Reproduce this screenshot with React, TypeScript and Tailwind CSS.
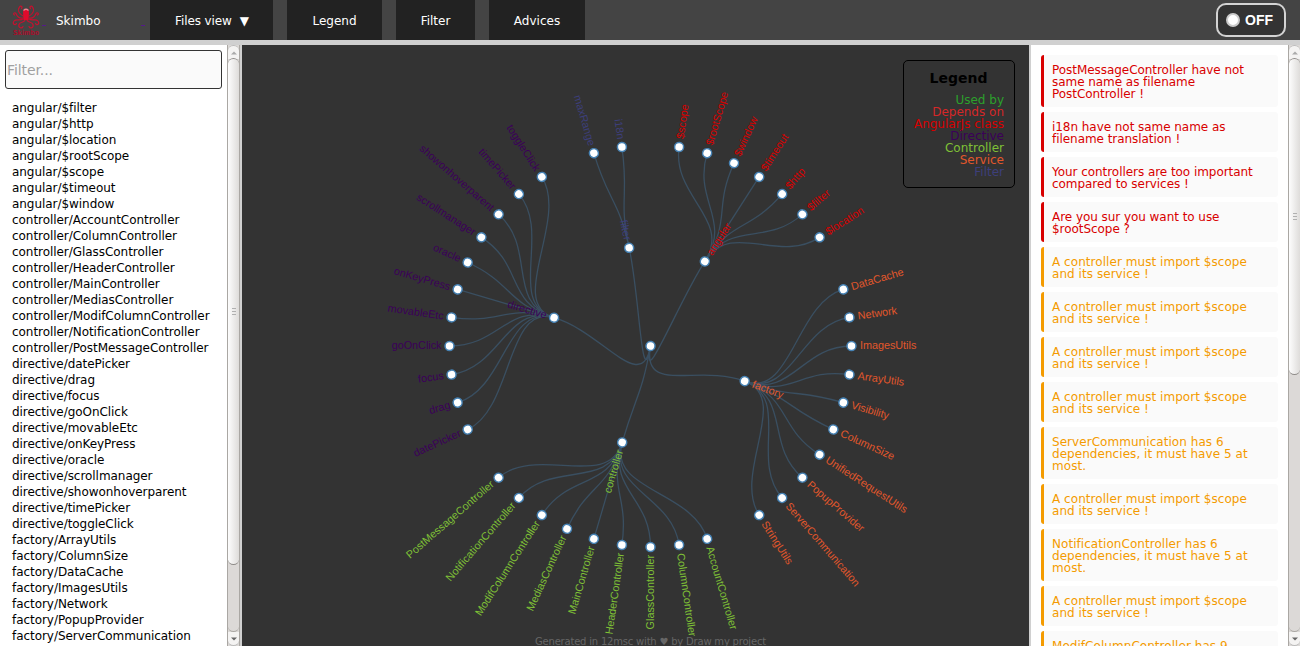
import React from "react";

type Group = { name: string; color: string; start: number; leaves: string[] };

const STEP = 360 / 44;
const R1 = 100.5;
const R2 = 201;

const groups: Group[] = [
  { name: "angular", color: "#d80000", start: 1, leaves: ["$scope", "$rootScope", "$window", "$timeout", "$http", "$filter", "$location"] },
  { name: "factory", color: "#e2572b", start: 9, leaves: ["DataCache", "Network", "ImagesUtils", "ArrayUtils", "Visibility", "ColumnSize", "UnifiedRequestUtils", "PopupProvider", "ServerCommunication", "StringUtils"] },
  { name: "controller", color: "#7fc036", start: 20, leaves: ["AccountController", "ColumnController", "GlassController", "HeaderController", "MainController", "MediasController", "ModifColumnController", "NotificationController", "PostMessageController"] },
  { name: "directive", color: "#3b0059", start: 30, leaves: ["datePicker", "drag", "focus", "goOnClick", "movableEtc", "onKeyPress", "oracle", "scrollmanager", "showonhoverparent", "timePicker", "toggleClick"] },
  { name: "filter", color: "#3d3f7b", start: 42, leaves: ["maxRange", "i18n"] },
];

const point = (r: number, angle: number) => {
  const a = ((angle - 90) * Math.PI) / 180;
  return `${(r * Math.cos(a)).toFixed(2)},${(r * Math.sin(a)).toFixed(2)}`;
};

const diagonal = (r0: number, a0: number, r1: number, a1: number) => {
  const m = (r0 + r1) / 2;
  return `M${point(r0, a0)}C${point(m, a0)} ${point(m, a1)} ${point(r1, a1)}`;
};

const ROOT_ANGLE = 23.25 * STEP;

const links: string[] = [];
const nodes: { name: string; color: string; r: number; angle: number }[] = [{ name: "", color: "#fff", r: 0, angle: ROOT_ANGLE }];
groups.forEach((g) => {
  const ga = (g.start + (g.leaves.length - 1) / 2) * STEP;
  links.push(diagonal(0, ROOT_ANGLE, R1, ga));
  nodes.push({ name: g.name, color: g.color, r: R1, angle: ga });
  g.leaves.forEach((leaf, i) => {
    const a = (g.start + i) * STEP;
    links.push(diagonal(R1, ga, R2, a));
    nodes.push({ name: leaf, color: g.color, r: R2, angle: a });
  });
});

const files = [
  "angular/$filter", "angular/$http", "angular/$location", "angular/$rootScope", "angular/$scope", "angular/$timeout", "angular/$window",
  "controller/AccountController", "controller/ColumnController", "controller/GlassController", "controller/HeaderController",
  "controller/MainController", "controller/MediasController", "controller/ModifColumnController", "controller/NotificationController",
  "controller/PostMessageController", "directive/datePicker", "directive/drag", "directive/focus", "directive/goOnClick",
  "directive/movableEtc", "directive/onKeyPress", "directive/oracle", "directive/scrollmanager", "directive/showonhoverparent",
  "directive/timePicker", "directive/toggleClick", "factory/ArrayUtils", "factory/ColumnSize", "factory/DataCache",
  "factory/ImagesUtils", "factory/Network", "factory/PopupProvider", "factory/ServerCommunication",
];

const scopeAdvice = ["A controller must import $scope", "and its service !"];
const advices: { error?: boolean; lines: string[] }[] = [
  { error: true, lines: ["PostMessageController have not", "same name as filename", "PostController !"] },
  { error: true, lines: ["i18n have not same name as", "filename translation !"] },
  { error: true, lines: ["Your controllers are too important", "compared to services !"] },
  { error: true, lines: ["Are you sur you want to use", "$rootScope ?"] },
  { lines: scopeAdvice },
  { lines: scopeAdvice },
  { lines: scopeAdvice },
  { lines: scopeAdvice },
  { lines: ["ServerCommunication has 6", "dependencies, it must have 5 at", "most."] },
  { lines: scopeAdvice },
  { lines: ["NotificationController has 6", "dependencies, it must have 5 at", "most."] },
  { lines: scopeAdvice },
  { lines: ["ModifColumnController has 9"] },
];

const legend = [
  ["Used by", "text-[#2ca02c]"],
  ["Depends on", "text-[#d62728]"],
  ["AngularJs class", "text-[#d80000]"],
  ["Directive", "text-[#3b0059]"],
  ["Controller", "text-[#7fc036]"],
  ["Service", "text-[#e2572b]"],
  ["Filter", "text-[#3d3f7b]"],
];

function Logo() {
  return (
    <svg width="30" height="34" viewBox="0 0 30 34" className="shrink-0">
      <g fill="none" stroke="#c4122f" strokeWidth="1.2" strokeLinecap="round">
        <path d="M12 13C8 11 6 7 8.500 4C10 2 12 4 10.500 5.500" />
        <path d="M18 13C22 11 24 7 21.500 4C20 2 18 4 19.500 5.500" />
        <path d="M12 15C8 16 6 13 5 10.500C3.500 8.500 1.500 11 3.500 12" />
        <path d="M18 15C22 16 24 13 25 10.500C26.500 8.500 28.500 11 26.500 12" />
        <path d="M12 16C9 18 5 15.500 3 18C1 21 4 23 5.500 20.500" />
        <path d="M18 16C21 18 25 15.500 27 18C29 21 26 23 24.500 20.500" />
        <path d="M14 17C13 20 9 18.500 8 21.500C7 25 11 26 12 23.500" />
        <path d="M16 17C17 20 21 18.500 22 21.500C23 25 19 26 18 23.500" />
      </g>
      <path d="M12 9.500C11.500 5 18.500 5 18 9.500L17.500 17H12.500Z" fill="#e00b2c" />
      <path d="M12.500 7.500Q15 5 17.500 7.500" fill="none" stroke="#ee7f8d" strokeWidth="1.200" />
      <text x="15" y="32" textAnchor="middle" fontSize="7" fontWeight="bold" textLength="26" lengthAdjust="spacingAndGlyphs" fill="#a5102c" fontFamily="DejaVu Sans">Skimbo</text>
    </svg>
  );
}

function Scrollbar({ thumb }: { thumb: string }) {
  const button = "flex h-3.5 shrink-0 items-center justify-center bg-[#f4f3f2]";
  return (
    <div className="flex w-[13px] shrink-0 flex-col overflow-hidden border-x border-[#aaa7a3] bg-[#dcd9d7]">
      <div className={button + " rounded-t-[6px] border-t border-[#bbb]"}>
        <svg width="6" height="4"><path d="M0 3.500L3 0.500L6 3.500Z" fill="#aaa" /></svg>
      </div>
      <div className={"-mt-px flex shrink-0 flex-col items-center justify-center gap-0.5 rounded-[6px] border-y border-[#8f8c89] bg-linear-to-r from-[#fdfdfd] to-[#dedcda] " + thumb}>
        <i className="h-px w-1 bg-[#b0b0b0]" />
        <i className="h-px w-1 bg-[#b0b0b0]" />
        <i className="h-px w-1 bg-[#b0b0b0]" />
      </div>
      <div className="grow rounded-b-[6px] border-b border-[#aaa7a3]" />
      <div className={button + " rounded-b-[6px] border-b border-[#bbb]"}>
        <svg width="6" height="4"><path d="M0 0.500L3 3.500L6 0.500Z" fill="#666" /></svg>
      </div>
    </div>
  );
}

export default function App() {
  return (
    <div className="flex h-[646px] w-[1300px] flex-col overflow-hidden bg-white font-['DejaVu_Sans',sans-serif] text-[12px] text-black">
      <header className="flex h-[45px] shrink-0 border-b-[5px] border-[#d0d0d0] bg-[#444] text-white">
        <div className="flex w-[150px] shrink-0 items-center pl-[11px]">
          <Logo />
          <i className="mt-[11px] ml-px h-px w-1 bg-[#551a8b]" />
          <span className="ml-2.5 pt-0.5">Skimbo</span>
          <i className="mt-[11px] mr-[5px] ml-auto h-px w-1 bg-[#551a8b]" />
        </div>
        <nav className="flex gap-3.5">
          <a className="flex w-[123px] items-center bg-[#222] pt-0.5 pl-[25px] whitespace-pre"><span className="tracking-[-0.1px]">Files view</span><span className="ml-2">▼</span></a>
          <a className="flex w-[95px] items-center justify-center bg-[#222] pt-0.5">Legend</a>
          <a className="flex w-[79px] items-center justify-center bg-[#222] pt-0.5">Filter</a>
          <a className="flex w-24 items-center justify-center bg-[#222] pt-0.5">Advices</a>
        </nav>
        <button className="mt-[3px] mr-3.5 ml-auto flex h-[34px] w-[70px] items-center rounded-[10px] border-2 border-[#d3d3d3] bg-[#333] pl-2 font-['Liberation_Sans',sans-serif] text-[14px] font-bold">
          <i className="mr-[5px] size-3.5 rounded-full border-2 border-[#ccc] bg-white" />
          OFF
        </button>
      </header>

      <div className="flex min-h-0 grow">
        <aside className="flex w-[242px] shrink-0 border-r-2 border-[#d0d0d0]">
          <div className="w-[227px] overflow-hidden pt-[5px] pl-[5px]">
            <div className="flex h-[39px] w-[217px] items-center rounded-[3px] border border-[#333] bg-[#fafafa] pt-0.5 pl-px text-[14px] tracking-[-0.1px] text-[#a0a0a0]">Filter...</div>
            <ul className="mt-[11px] pl-[7px] leading-4 tracking-[-0.05px] whitespace-nowrap">
              {files.map((f) => <li key={f}>{f}</li>)}
            </ul>
          </div>
          <Scrollbar thumb="h-[507px]" />
        </aside>

        <main className="relative w-[787px] shrink-0 overflow-hidden bg-[#333]">
          <svg width="787" height="601" className="block font-['Liberation_Sans',sans-serif] text-[10.8px]">
            <g transform="translate(408.5,301)">
              {links.map((d, i) => <path key={i} d={d} fill="none" stroke="#3a4f61" strokeWidth="1.3" />)}
              {nodes.map((n, i) => (
                <g key={i} transform={`rotate(${n.angle - 90}) translate(${n.r})`}>
                  <circle r="4.500" fill="#fff" stroke="steelblue" strokeWidth="1.500" />
                  <text
                    dy=".31em"
                    fill={n.color}
                    textAnchor={n.angle < 179.9 ? "start" : "end"}
                    transform={n.angle < 179.9 ? "translate(8.4)" : "rotate(180) translate(-8)"}
                  >
                    {n.name}
                  </text>
                </g>
              ))}
            </g>
          </svg>
          <section className="absolute top-[15px] right-3.5 h-32 w-28 rounded-[5px] border border-black pr-2.5 text-right leading-3">
            <h2 className="mt-2.5 mb-[9px] pl-[9px] text-center text-[14px] leading-[14px] font-bold">Legend</h2>
            {legend.map(([label, color]) => <p key={label} className={"whitespace-nowrap " + color}>{label}</p>)}
          </section>
          <footer className="absolute bottom-[-2px] left-[293px] text-[10px] leading-3 tracking-[-0.2px] whitespace-nowrap text-[#666]">
            Generated in 12msc with ♥ by Draw my project
          </footer>
        </main>

        <aside className="flex w-[271px] shrink-0 border-l-2 border-[#d0d0d0]">
          <div className="flex w-[257px] shrink-0 flex-col gap-[5px] overflow-hidden pt-2.5 pl-2.5">
            {advices.map((a, i) => (
              <div
                key={i}
                className={
                  "w-[237px] shrink-0 rounded-[3px] border-l-[3px] bg-[#fafafa] pt-[9px] pb-[7px] pl-2 leading-3 whitespace-nowrap " +
                  (a.error ? "border-[#d80000] tracking-[-0.05px] text-[#d80000]" : "border-[#f49b00] tracking-[0.05px] text-[#f49b00]")
                }
              >
                {a.lines.map((l) => <p key={l}>{l}</p>)}
              </div>
            ))}
          </div>
          <Scrollbar thumb="h-[317px]" />
        </aside>
      </div>
    </div>
  );
}
